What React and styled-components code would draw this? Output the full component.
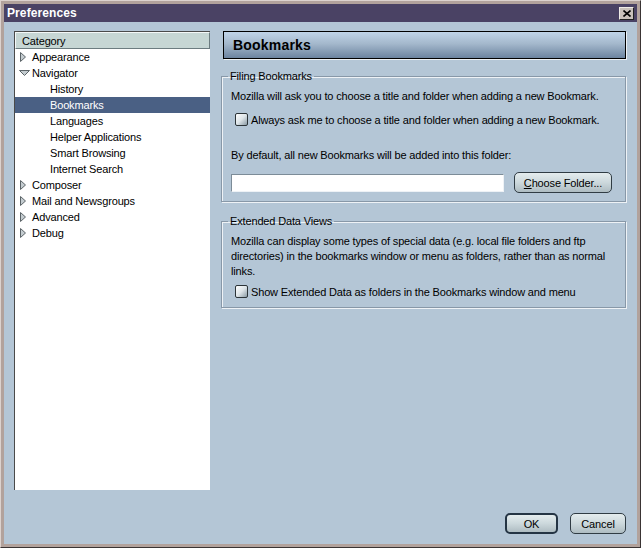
import styled, { createGlobalStyle } from 'styled-components';

const GlobalStyle = createGlobalStyle`
  html, body {
    margin: 0;
    padding: 0;
    background: #000;
  }
  body {
    font-family: "Liberation Sans", Arial, sans-serif;
    font-size: 11px;
    letter-spacing: -0.15px;
    color: #000;
  }
`;

const categories = [
  { label: 'Appearance', level: 0, twisty: 'closed' },
  { label: 'Navigator', level: 0, twisty: 'open' },
  { label: 'History', level: 1 },
  { label: 'Bookmarks', level: 1, selected: true },
  { label: 'Languages', level: 1 },
  { label: 'Helper Applications', level: 1 },
  { label: 'Smart Browsing', level: 1 },
  { label: 'Internet Search', level: 1 },
  { label: 'Composer', level: 0, twisty: 'closed' },
  { label: 'Mail and Newsgroups', level: 0, twisty: 'closed' },
  { label: 'Advanced', level: 0, twisty: 'closed' },
  { label: 'Debug', level: 0, twisty: 'closed' },
];

const Twisty = ({ open }) => (
  <StTwisty width="11" height="12" viewBox="0 0 11 12">
    {open ? (
      <path d="M0.5 3.5 H10.5 L5.5 8.5 Z" fill="#c4ccd0" stroke="#5c6468" strokeWidth="1" />
    ) : (
      <path d="M1.5 1.5 V10.5 L6.5 6 Z" fill="#c4ccd0" stroke="#5c6468" strokeWidth="1" />
    )}
  </StTwisty>
);

const App = () => {
  return (
    <>
      <GlobalStyle />
      <StWindow>
        <StTitleBar>
          <StTitle>Preferences</StTitle>
          <StCloseButton>
            <svg width="8" height="7" viewBox="0 0 8 7">
              <path d="M0.5 0.5 L7.5 6.5 M7.5 0.5 L0.5 6.5" stroke="#000" strokeWidth="1.6" />
            </svg>
          </StCloseButton>
        </StTitleBar>

        <StBody>
          <StMain>
            <StTree>
              <StTreeHeader>Category</StTreeHeader>
              {categories.map((item) => (
                <StTreeRow key={item.label} $level={item.level} $selected={item.selected}>
                  {item.twisty && <Twisty open={item.twisty === 'open'} />}
                  {item.label}
                </StTreeRow>
              ))}
            </StTree>

            <StPanel>
              <StPanelHeader>Bookmarks</StPanelHeader>

              <StGroup>
                <StLegend>Filing Bookmarks</StLegend>
                <StText>Mozilla will ask you to choose a title and folder when adding a new Bookmark.</StText>
                <StCheckRow $gap={8}>
                  <StCheckbox />
                  Always ask me to choose a title and folder when adding a new Bookmark.
                </StCheckRow>
                <StText $gap={21}>By default, all new Bookmarks will be added into this folder:</StText>
                <StFolderRow>
                  <StInput />
                  <StButton $width={98}>
                    <u>C</u>hoose Folder...
                  </StButton>
                </StFolderRow>
              </StGroup>

              <StGroup>
                <StLegend>Extended Data Views</StLegend>
                <StText>
                  Mozilla can display some types of special data (e.g. local file folders and ftp
                  directories) in the bookmarks window or menu as folders, rather than as normal
                  links.
                </StText>
                <StCheckRow $gap={5}>
                  <StCheckbox />
                  Show Extended Data as folders in the Bookmarks window and menu
                </StCheckRow>
              </StGroup>
            </StPanel>
          </StMain>

          <StFooter>
            <StButton $width={53} $default>OK</StButton>
            <StButton $width={56}>Cancel</StButton>
          </StFooter>
        </StBody>
      </StWindow>
    </>
  );
};

export default App;

const StWindow = styled.div`
  width: 641px;
  height: 548px;
  box-sizing: border-box;
  display: flex;
  flex-direction: column;
  background: #b2a29c;
  border: 1px solid;
  border-color: #dcd2ce #3a3434 #3a3434 #dcd2ce;
  padding: 3px;
`;

const StTitleBar = styled.div`
  height: 18px;
  flex: 0 0 18px;
  display: flex;
  align-items: center;
  justify-content: space-between;
  background: #4a4264;
  padding: 0 3px 0 3px;
`;

const StTitle = styled.span`
  color: #fff;
  font-weight: bold;
  font-size: 12px;
  letter-spacing: 0.1px;
`;

const StCloseButton = styled.div`
  width: 15px;
  height: 13px;
  box-sizing: border-box;
  display: flex;
  align-items: center;
  justify-content: center;
  background: #c8c0ba;
  border: 1px solid;
  border-color: #f0ece8 #202020 #202020 #f0ece8;
`;

const StBody = styled.div`
  flex: 1;
  display: flex;
  flex-direction: column;
  background: #b4c6d6;
  padding: 9px 11px 10px 10px;
`;

const StMain = styled.div`
  flex: 0 0 459px;
  display: flex;
  gap: 11px;
`;

const StTree = styled.div`
  width: 196px;
  box-sizing: border-box;
  background: #fff;
  border-left: 1px solid #4a4a4a;
  border-top: 1px solid #4a4a4a;
`;

const StTreeHeader = styled.div`
  height: 17px;
  box-sizing: border-box;
  display: flex;
  align-items: center;
  padding-left: 6px;
  background: #c6d6d4;
  border: 1px solid;
  border-color: #f4f8f8 #6c7c80 #6c7c80 #f4f8f8;
`;

const StTreeRow = styled.div`
  height: 16px;
  display: flex;
  align-items: center;
  padding-left: ${(p) => (p.$level ? 35 : 4)}px;
  background: ${(p) => (p.$selected ? '#4a6084' : 'transparent')};
  color: ${(p) => (p.$selected ? '#fff' : '#000')};
`;

const StTwisty = styled.svg`
  margin-right: 2px;
  flex: 0 0 11px;
`;

const StPanel = styled.div`
  flex: 1;
  display: flex;
  flex-direction: column;
`;

const StPanelHeader = styled.div`
  height: 28px;
  box-sizing: border-box;
  margin-left: 2px;
  display: flex;
  align-items: center;
  padding-left: 9px;
  font-size: 14px;
  font-weight: bold;
  letter-spacing: 0.2px;
  border: 1px solid #000;
  box-shadow: 1px 1px 0 #eef2f6;
  background: linear-gradient(to bottom, #c0d4e8 0%, #a4b8cc 45%, #6c84a0 100%);
`;

const StGroup = styled.fieldset`
  margin: 11px 0 0 0;
  padding: 6px 8px 8px 9px;
  border: 1px solid #8898a8;
  box-shadow: 1px 1px 0 #eef2f6, inset 1px 1px 0 #eef2f6;
  min-width: 0;
  & + & {
    margin-top: 13px;
  }
`;

const StLegend = styled.legend`
  padding: 0 2px;
  margin-left: -3px;
  line-height: 13px;
`;

const StText = styled.div`
  line-height: 15px;
  margin-top: ${(p) => p.$gap || 0}px;
`;

const StCheckRow = styled.div`
  display: flex;
  align-items: center;
  height: 15px;
  margin-top: ${(p) => p.$gap}px;
  margin-left: 4px;
  gap: 3px;
`;

const StCheckbox = styled.span`
  width: 13px;
  height: 13px;
  box-sizing: border-box;
  border: 1px solid #2c3438;
  border-radius: 2px;
  background: linear-gradient(135deg, #ffffff 0%, #dde4e8 50%, #8a9aa4 100%);
`;

const StFolderRow = styled.div`
  display: flex;
  align-items: center;
  margin-top: 9px;
  gap: 10px;
`;

const StInput = styled.div`
  width: 273px;
  height: 18px;
  box-sizing: border-box;
  background: #fff;
  border: 1px solid;
  border-color: #7c8c98 #eef2f6 #eef2f6 #7c8c98;
`;

const StButton = styled.div`
  width: ${(p) => p.$width}px;
  height: 21px;
  box-sizing: border-box;
  display: flex;
  align-items: center;
  justify-content: center;
  border-radius: 5px;
  border: ${(p) => (p.$default ? '2px solid #243444' : '1px solid #303c44')};
  background: linear-gradient(to bottom, #e4ecee 0%, #ccd8dc 50%, #aebcc2 100%);
  font-size: 11px;
  u {
    text-decoration: underline;
  }
`;

const StFooter = styled.div`
  margin-top: auto;
  display: flex;
  justify-content: flex-end;
  gap: 12px;
`;
